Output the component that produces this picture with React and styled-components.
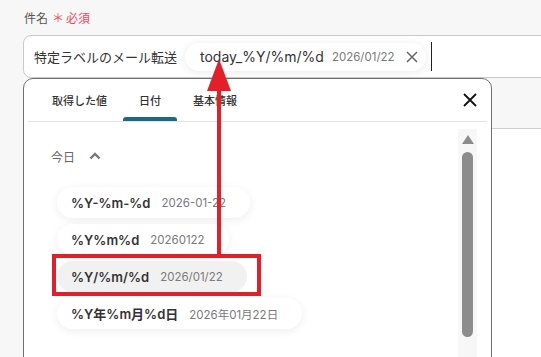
import React from 'react'
import styled, { createGlobalStyle, css } from 'styled-components'

const GlobalStyle = createGlobalStyle`
  html, body {
    margin: 0;
    padding: 0;
    background: #f7f7f7;
    font-family: Inter, "Noto Sans CJK JP", "Noto Sans", sans-serif;
  }
  * { box-sizing: border-box; }
`

const Page = styled.div`
  position: relative;
  width: 541px;
  height: 357px;
  overflow: hidden;
  padding: 8px 0 0 23px;
`

const Label = styled.div`
  display: flex;
  align-items: center;
  gap: 4px;
  height: 18px;
  padding-left: 1px;
  font-size: 12px;
  color: #555;
`

const Required = styled.span`
  color: #ec4a5c;
  font-size: 12px;
  display: flex;
  align-items: center;
  gap: 2px;
`

const InputBox = styled.div`
  margin-top: 9px;
  width: 620px;
  height: 43px;
  background: #fff;
  border: 1px solid #c9c9c9;
  border-radius: 8px;
  display: flex;
  align-items: center;
  padding-left: 10px;
  font-size: 13px;
  color: #333;
`

const InputChip = styled.span`
  margin-left: 8px;
  height: 28px;
  display: flex;
  align-items: center;
  padding: 0 8px 0 15px;
  border-radius: 14px;
  background: #fff;
  box-shadow: 0 1px 8px rgba(0, 0, 0, 0.09);
  font-size: 14px;
  white-space: nowrap;
`

const ChipDate = styled.span`
  margin-left: ${p => p.$gap || 9}px;
  font-size: 11.5px;
  color: #7a7a7a;
  font-weight: 400;
`

const Cursor = styled.span`
  margin-left: 5px;
  width: 1.5px;
  height: 29px;
  background: #222;
`

const BehindBox = styled.div`
  margin: 50px 0 0 200px;
  height: 240px;
  background: #fff;
  border-top: 1px solid #d0d0d0;
`

const Panel = styled.div`
  position: absolute;
  left: 23px;
  top: 78px;
  width: 469px;
  height: 300px;
  background: #fff;
  border: 1px solid #707070;
  border-radius: 10px 10px 0 0;
  display: flex;
  flex-direction: column;
`

const TabBar = styled.div`
  height: 43px;
  margin: 0 4px;
  padding-left: 8px;
  display: flex;
  align-items: stretch;
  border-bottom: 1px solid #e3e3e3;
`

const Tab = styled.div`
  position: relative;
  padding: 0 16px;
  display: flex;
  align-items: center;
  font-size: 11px;
  font-weight: 500;
  color: #333;
  ${p =>
    p.$active &&
    css`
      &::after {
        content: '';
        position: absolute;
        left: 0;
        right: 0;
        bottom: 0;
        height: 4px;
        border-radius: 3px 3px 0 0;
        background: #1b6b80;
      }
    `}
`

const CloseButton = styled.div`
  margin-left: auto;
  margin-right: 10px;
  display: flex;
  align-items: center;
`

const Body = styled.div`
  flex: 1;
  display: flex;
  min-height: 0;
`

const Content = styled.div`
  flex: 1;
  padding: 24px 0 0 27px;
`

const SectionHeader = styled.div`
  height: 20px;
  display: flex;
  align-items: center;
  gap: 14px;
  font-size: 12px;
  color: #666;
`

const ChipList = styled.div`
  margin-top: 21px;
  padding-left: 6px;
  display: flex;
  flex-direction: column;
  align-items: flex-start;
  gap: 6px;
`

const FormatChip = styled.div`
  height: 31px;
  display: flex;
  align-items: center;
  padding: 0 24px 0 14px;
  border-radius: 16px;
  background: ${p => (p.$hover ? '#f1f1f1' : '#fff')};
  box-shadow: ${p => (p.$hover ? 'none' : '0 2px 10px rgba(0, 0, 0, 0.07)')};
  font-size: 13px;
  font-weight: 600;
  color: #333;
  white-space: nowrap;
`

const Scrollbar = styled.div`
  width: 19px;
  margin: 7px 14px 0 0;
  background: #f7f7f7;
  display: flex;
  flex-direction: column;
  align-items: center;
`

const ScrollUp = styled.div`
  margin-top: 6px;
  width: 0;
  height: 0;
  border-left: 6px solid transparent;
  border-right: 6px solid transparent;
  border-bottom: 9px solid #8c8c8c;
`

const Thumb = styled.div`
  margin-top: 8px;
  width: 11px;
  height: 185px;
  border-radius: 6px;
  background: #8c8c8c;
`

const Annotation = styled.svg`
  position: absolute;
  left: 0;
  top: 0;
  pointer-events: none;
`

const formats = [
  { name: '%Y-%m-%d', value: '2026-01-22' },
  { name: '%Y%m%d', value: '20260122' },
  { name: '%Y/%m/%d', value: '2026/01/22', hover: true },
  { name: '%Y年%m月%d日', value: '2026年01月22日' }
]

const tabs = ['取得した値', '日付', '基本情報']

export default function App() {
  return (
    <Page>
      <GlobalStyle />
      <Label>
        件名
        <Required>
          <span>＊</span>必須
        </Required>
      </Label>
      <InputBox>
        特定ラベルのメール転送
        <InputChip>
          today_%Y/%m/%d
          <ChipDate $gap={8}>2026/01/22</ChipDate>
          <svg width="12" height="12" viewBox="0 0 12 12" style={{ marginLeft: 11 }}>
            <path d="M1 1 L11 11 M11 1 L1 11" stroke="#666" strokeWidth="1.5" />
          </svg>
        </InputChip>
        <Cursor />
      </InputBox>
      <BehindBox />

      <Panel>
        <TabBar>
          {tabs.map(t => (
            <Tab key={t} $active={t === '日付'}>
              {t}
            </Tab>
          ))}
          <CloseButton>
            <svg width="14" height="14" viewBox="0 0 14 14">
              <path d="M1 1 L13 13 M13 1 L1 13" stroke="#111" strokeWidth="1.8" />
            </svg>
          </CloseButton>
        </TabBar>
        <Body>
          <Content>
            <SectionHeader>
              今日
              <svg width="12" height="8" viewBox="0 0 12 8">
                <path d="M1.5 6.5 L6 2 L10.5 6.5" stroke="#777" strokeWidth="2.4" fill="none" />
              </svg>
            </SectionHeader>
            <ChipList>
              {formats.map(f => (
                <FormatChip key={f.name} $hover={f.hover}>
                  {f.name}
                  <ChipDate $gap={11}>{f.value}</ChipDate>
                </FormatChip>
              ))}
            </ChipList>
          </Content>
          <Scrollbar>
            <ScrollUp />
            <Thumb />
          </Scrollbar>
        </Body>
      </Panel>

      <Annotation width="541" height="357" viewBox="0 0 541 357">
        <rect x="54" y="256" width="205" height="38" fill="none" stroke="#e3202a" strokeWidth="4" />
        <rect x="217" y="86" width="4" height="169" fill="#e3202a" />
        <polygon points="219,59 207,91 231,91" fill="#e3202a" />
      </Annotation>
    </Page>
  )
}
